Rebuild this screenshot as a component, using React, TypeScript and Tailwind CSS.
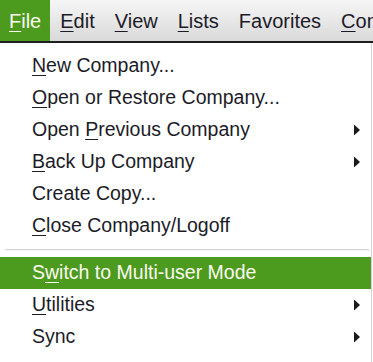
import React from "react";

const U = ({ children }: { children: React.ReactNode }) => (
  <span className="underline decoration-1 underline-offset-[3px]">{children}</span>
);

const Arrow = () => (
  <svg width="6" height="11" viewBox="0 0 6 11" className="absolute right-[11px] top-1/2 -translate-y-1/2">
    <path d="M0 0 L6 5.5 L0 11 Z" fill="#1a1a1a" />
  </svg>
);

type Item = { label: React.ReactNode; arrow?: boolean; active?: boolean };

const Row = ({ label, arrow, active }: Item) => (
  <div
    className={`relative h-[32px] flex items-center pl-[32px] ${
      active ? "bg-[#4c9a1e] text-[#fbfbf0]" : "text-[#1c1c28]"
    }`}
  >
    <span className="leading-none">{label}</span>
    {arrow && <Arrow />}
  </div>
);

export default function App() {
  return (
    <div
      className="w-[373px] h-[362px] overflow-hidden bg-white text-[19.5px]"
      style={{ fontFamily: '"Liberation Sans", Arial, sans-serif' }}
    >
      <div className="h-[41px] flex items-stretch bg-gradient-to-b from-[#f6f6f6] to-[#d9d9d9] text-[#1c1c28] text-[20px] overflow-hidden">
        <div className="pl-[9px] pr-[9px] flex items-center bg-[#4c9a1e] text-[#fbfbf0]">
          <span><U>F</U>ile</span>
        </div>
        <div className="px-[10px] flex items-center"><span><U>E</U>dit</span></div>
        <div className="px-[10px] flex items-center"><span><U>V</U>iew</span></div>
        <div className="px-[10px] flex items-center"><span><U>L</U>ists</span></div>
        <div className="px-[10px] flex items-center"><span>Favorites</span></div>
        <div className="px-[10px] flex items-center whitespace-nowrap"><span><U>C</U>ompany</span></div>
      </div>
      <div className="h-[2px] bg-[#1e1e1e]" />
      <div className="w-[372px] h-[319px] border-r border-[#d4d4d4] pt-[7px]">
        <Row label={<><U>N</U>ew Company...</>} />
        <Row label={<><U>O</U>pen or Restore Company...</>} />
        <Row label={<>Open <U>P</U>revious Company</>} arrow />
        <Row label={<><U>B</U>ack Up Company</>} arrow />
        <Row label={<>Create Copy...</>} />
        <Row label={<><U>C</U>lose Company/Logoff</>} />
        <div className="h-[15px] flex items-center pl-[5px] pr-[2px]">
          <div className="h-[2px] w-full bg-[#d6d6d6] border-b border-[#f4f4f4]" />
        </div>
        <Row label={<>S<U>w</U>itch to Multi-user Mode</>} active />
        <Row label={<><U>U</U>tilities</>} arrow />
        <Row label={<>Sync</>} arrow />
      </div>
    </div>
  );
}
